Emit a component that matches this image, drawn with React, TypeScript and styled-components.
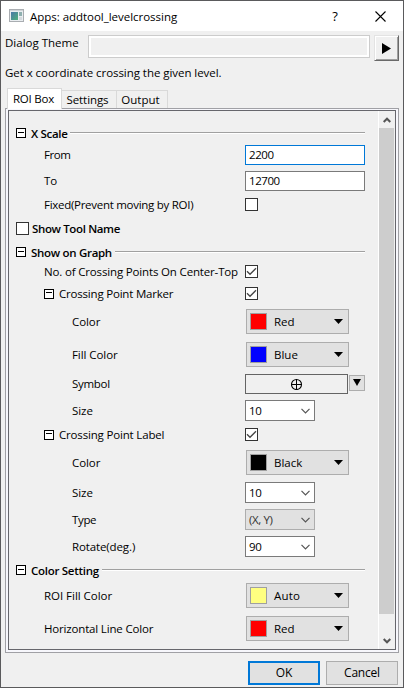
import React from "react";
import styled, { createGlobalStyle } from "styled-components";

const GlobalStyle = createGlobalStyle`
  * { box-sizing: border-box; }
  body { margin: 0; background: #f0f0f0; }
  svg { display: block; flex: none; }
`;

const Window = styled.div`
  width: 404px;
  height: 688px;
  border: 1px solid #5a5a5c;
  background: #f0f0f0;
  display: flex;
  flex-direction: column;
  overflow: hidden;
  font: 11.5px/15px "Open Sans", "Noto Sans", sans-serif;
  color: #000;
`;

const Text = styled.span<{ $track?: number; $bold?: boolean }>`
  letter-spacing: ${(p) => p.$track ?? -0.07}px;
  font-weight: ${(p) => (p.$bold ? 600 : 400)};
  white-space: pre;
`;

const TitleBar = styled.header`
  height: 30px;
  flex: none;
  background: #fff;
  display: flex;
  align-items: center;
  padding: 0 17px 0 8px;
`;

const TitleText = styled(Text)`
  flex: 1;
  padding-left: 5px;
`;

const HelpMark = styled.span`
  width: 8px;
  margin-right: 36px;
  font-size: 13px;
  text-align: center;
`;

const ThemeRow = styled.div`
  display: flex;
  height: 30px;
  flex: none;
  padding: 4px 4px 0 4px;
`;

const ThemeLabel = styled(Text)`
  width: 83px;
`;

const ThemeField = styled.div`
  width: 282px;
  height: 23px;
  border: 1px solid #ccc;
  background: #f0f0f0;
  box-shadow: inset 0 0 0 2px #fff;
`;

const PlayButton = styled.button`
  width: 25px;
  height: 26px;
  margin-left: 4px;
  padding: 0;
  background: #f0f0f0;
  border: 1px solid;
  border-color: #e3e3e3 #696969 #696969 #e3e3e3;
  box-shadow: inset 1px 1px #fff, inset -1px -1px #a0a0a0;
  display: flex;
  align-items: center;
  justify-content: center;
`;

const Description = styled.p`
  margin: 4px 0 0 4px;
  height: 22px;
  flex: none;
`;

const TabBar = styled.nav`
  display: flex;
  align-items: flex-end;
  height: 22px;
  flex: none;
  margin: 0 0 -1px 6px;
  z-index: 1;
`;

const Tab = styled.button<{ $width: number; $active?: boolean }>`
  width: ${(p) => p.$width}px;
  height: ${(p) => (p.$active ? 21 : 18)}px;
  margin-bottom: ${(p) => (p.$active ? 0 : 1)}px;
  padding: ${(p) => (p.$active ? "0 2px 1px 0" : "0 3px 0 0")};
  border: 1px solid #d9d9d9;
  border-width: ${(p) => (p.$active ? "1px 1px 0" : "1px 1px 0 0")};
  background: ${(p) => (p.$active ? "#fff" : "#f0f0f0")};
  font: inherit;
  color: inherit;
`;

const Page = styled.main`
  width: 394px;
  height: 545px;
  flex: none;
  margin-left: 4px;
  padding: 1px 2px 2px;
  border: 1px solid #a0a0a5;
  background: #f7f7fc;
`;

const ScrollPane = styled.div`
  height: 540px;
  border: 1px solid #66666c;
  background: #f0f0f0;
  display: flex;
`;

const Form = styled.div`
  width: 369px;
`;

const Row = styled.div<{ $height: number; $top?: number }>`
  display: flex;
  align-items: center;
  height: ${(p) => p.$height}px;
  padding-top: ${(p) => p.$top ?? 0}px;
`;

const LabelCell = styled.div<{ $indent: number; $gap?: number }>`
  width: 236px;
  flex: none;
  display: flex;
  align-items: center;
  gap: ${(p) => p.$gap ?? 5}px;
  padding-left: ${(p) => p.$indent}px;
`;

const LabelText = styled(Text)`
  padding-bottom: 0.5px;
`;

const SectionHead = styled.div`
  width: 356px;
  display: flex;
  align-items: center;
  gap: 5px;
  padding-left: 7px;
`;

const Rule = styled.i`
  flex: 1;
  height: 2px;
  border-top: 1px solid #a0a0a0;
  background: #fff;
`;

const SectionTitle = styled(Text)<{ $width: number }>`
  width: ${(p) => p.$width}px;
  margin-right: -5px;
  padding-top: 1px;
`;

const ToggleBox = styled.i`
  width: 10px;
  height: 10px;
  flex: none;
  border: 1px solid #000;
  background: #fff;
  display: flex;
  align-items: center;
  justify-content: center;
  &::before {
    content: "";
    width: 6px;
    height: 2px;
    border-top: 1px solid #000;
  }
`;

const CheckBox = styled.span`
  width: 13px;
  height: 13px;
  flex: none;
  border: 1px solid #333;
  background: #fff;
`;

const Field = styled.div<{ $focus?: boolean }>`
  width: 120px;
  height: 20px;
  padding-left: 3px;
  border: 1px solid ${(p) => (p.$focus ? "#0078d7" : "#7a7a7a")};
  background: #fff;
  line-height: 17px;
`;

const Combo = styled.div<{ $disabled?: boolean }>`
  width: 70px;
  height: 21px;
  padding: 0 4px 0 3px;
  border: 1px solid ${(p) => (p.$disabled ? "#adadad" : "#7a7a7a")};
  background: ${(p) => (p.$disabled ? "#e1e1e1" : "#fff")};
  color: ${(p) => (p.$disabled ? "#333" : "#000")};
  display: flex;
  align-items: center;
  justify-content: space-between;
`;

const ColorButton = styled.button`
  width: 103px;
  height: 25px;
  margin-left: 1px;
  padding: 0 5px 0 3px;
  border: 1px solid #adadad;
  background: #e1e1e1;
  font: inherit;
  color: inherit;
  display: flex;
  align-items: center;
`;

const Swatch = styled.i<{ $color: string }>`
  width: 17px;
  height: 17px;
  margin-right: 7px;
  border: 1px solid #a0a0a0;
  background: ${(p) => p.$color};
`;

const ColorName = styled(Text)`
  flex: 1;
  text-align: left;
`;

const SymbolField = styled.div`
  width: 103px;
  height: 20px;
  border: 1px solid #646464;
  display: flex;
  align-items: center;
  justify-content: center;
`;

const SymbolMenu = styled.button`
  width: 16px;
  height: 16px;
  margin: 0 0 2px 1px;
  padding: 0 1px 1px 0;
  border: 1px solid #adadad;
  background: #e1e1e1;
  display: flex;
  align-items: center;
  justify-content: center;
`;

const ScrollBar = styled.div`
  width: 17px;
  display: flex;
  flex-direction: column;
  border-left: 1px solid #fff;
  padding-right: 1px;
`;

const ScrollArrow = styled.div<{ $height: number }>`
  height: ${(p) => p.$height}px;
  padding-top: ${(p) => p.$height - 17}px;
  display: flex;
  align-items: center;
  justify-content: center;
`;

const ScrollThumb = styled.div`
  flex: 1;
  background: #cdcdcd;
`;

const Footer = styled.footer`
  display: flex;
  justify-content: flex-end;
  gap: 6px;
  padding: 8px 5px 0 0;
`;

const DialogButton = styled.button<{ $primary?: boolean }>`
  width: 72px;
  height: 24px;
  padding: 0 0 1px;
  border: ${(p) => (p.$primary ? "2px solid #0078d7" : "1px solid #adadad")};
  background: #e1e1e1;
  font: inherit;
  font-size: 12px;
  color: inherit;
`;

const AppIcon = () => (
  <svg width="16" height="14" viewBox="0 0 16 14" shapeRendering="crispEdges">
    <defs>
      <linearGradient id="screen" x1="0" y1="0" x2="1" y2="1">
        <stop offset="0" stopColor="#4a78a8" />
        <stop offset="1" stopColor="#4fb07a" />
      </linearGradient>
    </defs>
    <rect x="0.5" y="0.5" width="14" height="12" fill="#e9edf0" stroke="#a9adb1" />
    <rect x="1" y="1" width="13" height="1" fill="#cfd3d7" />
    <rect x="2" y="3" width="7" height="8" fill="url(#screen)" />
    <rect x="10" y="3" width="3" height="4" fill="#8fb0b0" />
    <rect x="10" y="8" width="3" height="3" fill="#d4dade" />
  </svg>
);

const CloseIcon = () => (
  <svg width="11" height="11" viewBox="0 0 11 11">
    <path d="M.5 .5l10 10M10.5 .5l-10 10" stroke="#000" strokeWidth="1.1" />
  </svg>
);

const PlayIcon = () => (
  <svg width="9" height="11" viewBox="0 0 9 11">
    <path d="M0 0l9 5.5L0 11z" />
  </svg>
);

const DownTriangle = ({ w, h }: { w: number; h: number }) => (
  <svg width={w} height={h} viewBox="0 0 9 5" preserveAspectRatio="none">
    <path d="M0 0h9L4.5 5z" />
  </svg>
);

const Chevron = () => (
  <svg width="9" height="6" viewBox="0 0 9 6">
    <path d="M.5 .8l4 4 4-4" fill="none" stroke="#555" strokeWidth="1.2" />
  </svg>
);

const ScrollChevron = ({ up }: { up?: boolean }) => (
  <svg width="8" height="6" viewBox="0 0 8 6">
    <path d={up ? "M.7 5L4 1.7 7.3 5" : "M.7 1L4 4.3 7.3 1"} fill="none" stroke="#555" strokeWidth="2" />
  </svg>
);

const CrossCircle = () => (
  <svg width="12" height="12" viewBox="0 0 12 12">
    <circle cx="5.5" cy="6.5" r="5" fill="none" stroke="#000" strokeWidth="1.1" />
    <path d="M5.5 1v11M0 6.5h11" stroke="#000" />
  </svg>
);

const Check = ({ on }: { on?: boolean }) => (
  <CheckBox>
    {on && (
      <svg width="11" height="11" viewBox="0 0 11 11">
        <path d="M1 5.3l3 3 6-6" fill="none" stroke="#444" strokeWidth="1.3" />
      </svg>
    )}
  </CheckBox>
);

type FieldRowProps = {
  label: string;
  height: number;
  indent: number;
  track?: number;
  toggle?: boolean;
  children?: React.ReactNode;
};

const FieldRow = ({ label, height, indent, track, toggle, children }: FieldRowProps) => (
  <Row $height={height}>
    <LabelCell $indent={indent}>
      {toggle && <ToggleBox />}
      <LabelText $track={track}>{label}</LabelText>
    </LabelCell>
    {children}
  </Row>
);

const Section = ({ title, height, top, width, track }: { title: string; height: number; top?: number; width: number; track: number }) => (
  <Row $height={height} $top={top}>
    <SectionHead>
      <ToggleBox />
      <SectionTitle $bold $track={track} $width={width}>{title}</SectionTitle>
      <Rule />
    </SectionHead>
  </Row>
);

const ColorPicker = ({ name, color, track = 0 }: { name: string; color: string; track?: number }) => (
  <ColorButton>
    <Swatch $color={color} />
    <ColorName $track={track}>{name}</ColorName>
    <DownTriangle w={9} h={5} />
  </ColorButton>
);

const Select = ({ value, disabled }: { value: string; disabled?: boolean }) => (
  <Combo $disabled={disabled}>
    <Text $track={-0.4}>{value}</Text>
    <Chevron />
  </Combo>
);

export default function App() {
  return (
    <Window>
      <GlobalStyle />
      <TitleBar>
        <AppIcon />
        <TitleText $track={-0.03}>Apps: addtool_levelcrossing</TitleText>
        <HelpMark>?</HelpMark>
        <CloseIcon />
      </TitleBar>
      <ThemeRow>
        <ThemeLabel $track={0}>Dialog Theme</ThemeLabel>
        <ThemeField />
        <PlayButton><PlayIcon /></PlayButton>
      </ThemeRow>
      <Description><Text $track={-0.05}>Get x coordinate crossing the given level.</Text></Description>
      <TabBar>
        <Tab $width={55} $active><Text $track={-0.23}>ROI Box</Text></Tab>
        <Tab $width={55}><Text $track={-0.08}>Settings</Text></Tab>
        <Tab $width={51}><Text $track={0.03}>Output</Text></Tab>
      </TabBar>
      <Page>
        <ScrollPane>
          <Form>
            <Section title="X Scale" height={31} top={13} width={39} track={-0.3} />
            <FieldRow label="From" height={26} indent={35} track={-0.4}>
              <Field $focus><Text $track={-0.45}>2200</Text></Field>
            </FieldRow>
            <FieldRow label="To" height={26} indent={35}>
              <Field><Text $track={-0.45}>12700</Text></Field>
            </FieldRow>
            <FieldRow label="Fixed(Prevent moving by ROI)" height={21} indent={35} track={-0.28}><Check /></FieldRow>
            <Row $height={27}>
              <LabelCell $indent={7} $gap={3}>
                <Check />
                <Text $bold $track={-0.36}>Show Tool Name</Text>
              </LabelCell>
            </Row>
            <Section title="Show on Graph" height={20} width={84} track={-0.3} />
            <FieldRow label="No. of Crossing Points On Center-Top" height={19} indent={35} track={-0.16}><Check on /></FieldRow>
            <FieldRow label="Crossing Point Marker" height={25} indent={35} track={-0.2} toggle><Check on /></FieldRow>
            <FieldRow label="Color" height={31} indent={63}><ColorPicker name="Red" color="#ff0000" /></FieldRow>
            <FieldRow label="Fill Color" height={35} indent={63}><ColorPicker name="Blue" color="#0000ff" /></FieldRow>
            <FieldRow label="Symbol" height={24} indent={63} track={-0.3}>
              <SymbolField><CrossCircle /></SymbolField>
              <SymbolMenu><DownTriangle w={8} h={7} /></SymbolMenu>
            </FieldRow>
            <FieldRow label="Size" height={29} indent={63}><Select value="10" /></FieldRow>
            <FieldRow label="Crossing Point Label" height={19} indent={35} track={-0.17} toggle><Check on /></FieldRow>
            <FieldRow label="Color" height={37} indent={63}><ColorPicker name="Black" color="#000000" /></FieldRow>
            <FieldRow label="Size" height={23} indent={63}><Select value="10" /></FieldRow>
            <FieldRow label="Type" height={31} indent={63} track={-0.35}><Select value="(X, Y)" disabled /></FieldRow>
            <FieldRow label="Rotate(deg.)" height={23} indent={63} track={-0.12}><Select value="90" /></FieldRow>
            <Section title="Color Setting" height={24} width={71} track={-0.28} />
            <FieldRow label="ROI Fill Color" height={27} indent={35} track={-0.03}><ColorPicker name="Auto" color="#ffff80" track={0.2} /></FieldRow>
            <FieldRow label="Horizontal Line Color" height={39} indent={35} track={-0.17}><ColorPicker name="Red" color="#ff0000" /></FieldRow>
          </Form>
          <ScrollBar>
            <ScrollArrow $height={17}><ScrollChevron up /></ScrollArrow>
            <ScrollThumb />
            <ScrollArrow $height={35}><ScrollChevron /></ScrollArrow>
          </ScrollBar>
        </ScrollPane>
      </Page>
      <Footer>
        <DialogButton $primary><Text $track={-0.1}>OK</Text></DialogButton>
        <DialogButton><Text $track={-0.2}>Cancel</Text></DialogButton>
      </Footer>
    </Window>
  );
}
